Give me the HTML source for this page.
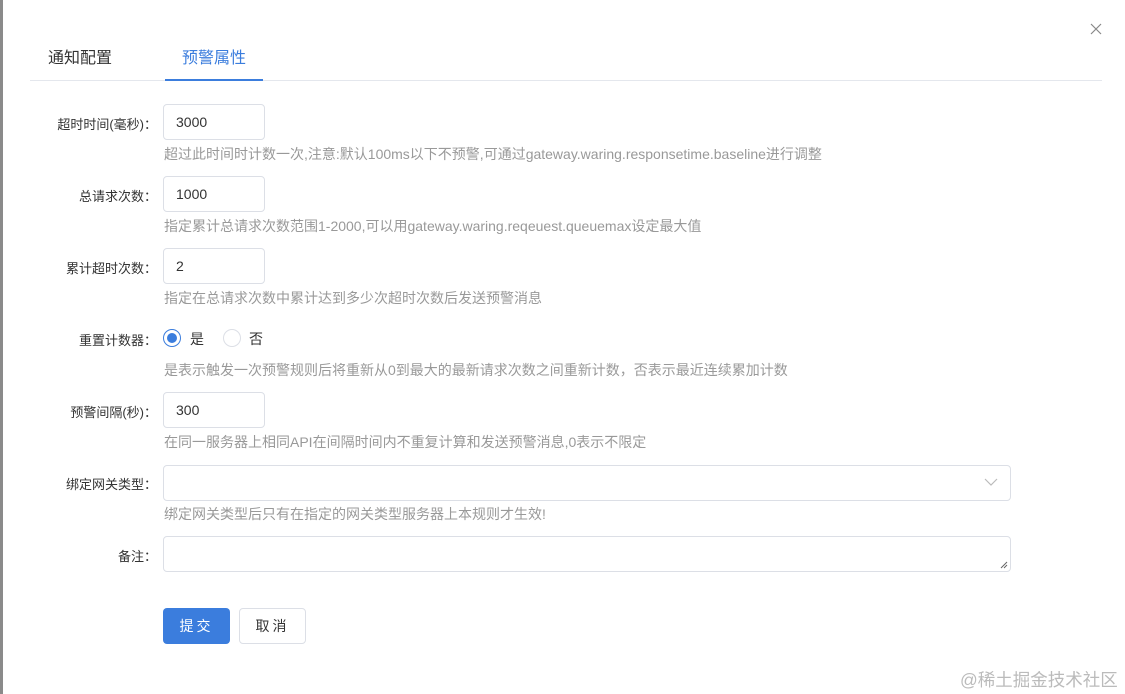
<!DOCTYPE html>
<html><head><meta charset="utf-8"><style>
*{box-sizing:border-box;margin:0;padding:0}
body{width:1125px;height:694px;background:#fff;font-family:"Liberation Sans","Noto Sans CJK SC",sans-serif;position:relative;overflow:hidden;color:#333}
.strip{position:absolute;left:0;top:0;width:3px;height:694px;background:#8a8a8a}
.a{position:absolute}
.tab{font-size:16px;top:44px}
.lbl{font-size:13px;color:#333;right:968px;text-align:right;white-space:nowrap}
.inp{border:1px solid #dcdfe6;border-radius:4px;background:#fff;font-size:14px;color:#333;padding-left:12px;display:flex;align-items:center}
.hint{font-size:14px;color:#999;left:164px;white-space:nowrap}
</style></head><body>
<div class="strip"></div>
<svg class="a" style="left:1090px;top:23px" width="12" height="12"><path d="M1 1 L11 11 M11 1 L1 11" stroke="#888" stroke-width="1.2"/></svg>
<div class="a tab" style="left:48px;color:#333">通知配置</div>
<div class="a tab" style="left:182px;color:#3b7ddd">预警属性</div>
<div class="a" style="left:30px;top:80px;width:1072px;height:1px;background:#e4e7ed"></div>
<div class="a" style="left:165px;top:79px;width:98px;height:2px;background:#3b7ddd"></div>

<div class="a lbl" style="top:114px">超时时间(毫秒)：</div>
<div class="a inp" style="left:163px;top:104px;width:102px;height:36px">3000</div>
<div class="a hint" style="top:144px">超过此时间时计数一次,注意:默认100ms以下不预警,可通过gateway.waring.responsetime.baseline进行调整</div>

<div class="a lbl" style="top:186px">总请求次数：</div>
<div class="a inp" style="left:163px;top:176px;width:102px;height:36px">1000</div>
<div class="a hint" style="top:216px">指定累计总请求次数范围1-2000,可以用gateway.waring.reqeuest.queuemax设定最大值</div>

<div class="a lbl" style="top:258px">累计超时次数：</div>
<div class="a inp" style="left:163px;top:248px;width:102px;height:36px">2</div>
<div class="a hint" style="top:288px">指定在总请求次数中累计达到多少次超时次数后发送预警消息</div>

<div class="a lbl" style="top:330px">重置计数器：</div>
<div class="a" style="left:163px;top:329px;width:18px;height:18px;border:1px solid #3b7ddd;border-radius:50%"><div style="margin:3px;width:10px;height:10px;border-radius:50%;background:#3b7ddd"></div></div>
<div class="a" style="left:190px;top:329px;font-size:14px">是</div>
<div class="a" style="left:223px;top:329px;width:18px;height:18px;border:1px solid #dcdfe6;border-radius:50%"></div>
<div class="a" style="left:249px;top:329px;font-size:14px">否</div>
<div class="a hint" style="top:360px">是表示触发一次预警规则后将重新从0到最大的最新请求次数之间重新计数，否表示最近连续累加计数</div>

<div class="a lbl" style="top:402px">预警间隔(秒)：</div>
<div class="a inp" style="left:163px;top:392px;width:102px;height:36px">300</div>
<div class="a hint" style="top:432px">在同一服务器上相同API在间隔时间内不重复计算和发送预警消息,0表示不限定</div>

<div class="a lbl" style="top:474px">绑定网关类型：</div>
<div class="a inp" style="left:163px;top:465px;width:848px;height:36px"></div>
<svg class="a" style="left:984px;top:477px" width="14" height="10"><path d="M1 2 L7 8 L13 2" fill="none" stroke="#bbb" stroke-width="1.2"/></svg>
<div class="a hint" style="top:504px">绑定网关类型后只有在指定的网关类型服务器上本规则才生效!</div>

<div class="a lbl" style="top:546px">备注：</div>
<div class="a inp" style="left:163px;top:536px;width:848px;height:36px"></div>
<svg class="a" style="left:1000px;top:561px" width="8" height="8"><path d="M7 1 L1 7 M7 4 L4 7" stroke="#666" stroke-width="1"/></svg>

<div class="a" style="left:163px;top:608px;width:67px;height:36px;background:#3b7ddd;border-radius:4px;color:#fff;font-size:14px;text-align:center;line-height:36px;letter-spacing:3px">提交</div>
<div class="a" style="left:239px;top:608px;width:67px;height:36px;border:1px solid #dcdfe6;border-radius:4px;color:#333;font-size:14px;text-align:center;line-height:34px;letter-spacing:3px">取消</div>

<div class="a" style="left:960px;top:667px;font-size:17.5px;color:#bbb">@稀土掘金技术社区</div>
</body></html>
